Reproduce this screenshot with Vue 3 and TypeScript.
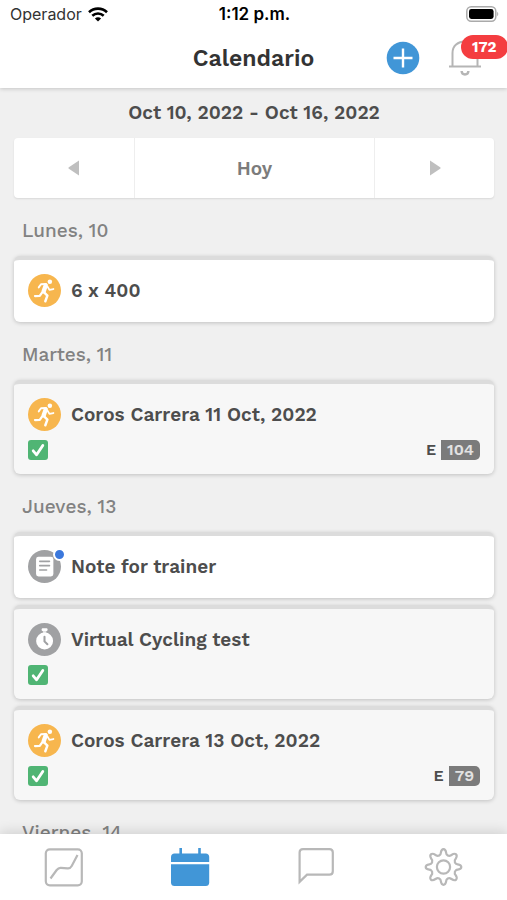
<script setup lang="ts">
import { ref } from 'vue'

type Kind = 'run' | 'note' | 'test'

interface Activity {
  id: number
  kind: Kind
  title: string
  done?: boolean
  effort?: number
  unread?: boolean
}

interface Day {
  label: string
  activities: Activity[]
}

const days = ref<Day[]>([
  { label: 'Lunes, 10', activities: [{ id: 1, kind: 'run', title: '6 x 400' }] },
  {
    label: 'Martes, 11',
    activities: [{ id: 2, kind: 'run', title: 'Coros Carrera 11 Oct, 2022', done: true, effort: 104 }],
  },
  {
    label: 'Jueves, 13',
    activities: [
      { id: 3, kind: 'note', title: 'Note for trainer', unread: true },
      { id: 4, kind: 'test', title: 'Virtual Cycling test', done: true },
      { id: 5, kind: 'run', title: 'Coros Carrera 13 Oct, 2022', done: true, effort: 79 },
    ],
  },
  { label: 'Viernes, 14', activities: [] },
])
</script>

<template>
  <div class="screen">
    <header class="top">
      <div class="status">
        <span class="carrier">
          Operador
          <svg width="20" height="15" viewBox="0 0 20 15" fill="none" stroke="#000" stroke-width="2.6">
            <path d="M1 5.2C6 0.4 14 0.4 19 5.2" />
            <path d="M4.3 8.8C7.5 5.8 12.5 5.8 15.7 8.8" />
            <path d="M10 14.6L6.9 11.4C8.7 9.8 11.3 9.8 13.1 11.4Z" fill="#000" stroke="none" />
          </svg>
        </span>
        <span class="clock">1:12 p.m.</span>
        <svg class="battery" width="34" height="16" viewBox="0 0 34 16">
          <rect x="1.8" y="0.8" width="29" height="14.4" rx="4.4" fill="#fff" stroke="#aaa" stroke-width="1.5" />
          <rect x="4" y="3" width="24.6" height="10" rx="2.4" fill="#000" />
          <path d="M32.2 5.8C33.6 6.6 33.6 9.4 32.2 10.2Z" fill="#aaa" />
        </svg>
      </div>
      <div class="titlebar">
        <h1>Calendario</h1>
        <div class="actions">
          <button type="button" aria-label="Añadir">
            <svg width="34" height="34" viewBox="0 0 34 34">
              <circle cx="17" cy="17" r="16.3" fill="#4196d7" />
              <path d="M17 7.5V26.5M7.5 17H26.5" stroke="#fff" stroke-width="2.4" />
            </svg>
          </button>
          <button class="bell" type="button" aria-label="Notificaciones">
            <svg width="34" height="36" viewBox="0 0 34 36" fill="none" stroke="#b5b5b5" stroke-width="2">
              <path d="M1 26.5H33" />
              <path d="M4.5 26V13C4.5 5.6 10 1.5 17 1.5S29.5 5.6 29.5 13V26" />
              <path d="M13.6 31C13.8 35.6 20.2 35.6 20.4 31" stroke-width="2.4" />
            </svg>
            <span class="count">172</span>
          </button>
        </div>
      </div>
    </header>

    <main class="content">
      <p class="range">Oct 10, 2022 - Oct 16, 2022</p>
      <nav class="week">
        <button type="button" aria-label="Semana anterior">
          <svg width="12" height="16" viewBox="0 0 12 16"><path d="M11 0.5V15.5L0.5 8.6V7.4Z" fill="#bfbfbf" /></svg>
        </button>
        <button type="button">Hoy</button>
        <button type="button" aria-label="Semana siguiente">
          <svg width="12" height="16" viewBox="0 0 12 16"><path d="M1 0.5V15.5L11.5 8.6V7.4Z" fill="#bfbfbf" /></svg>
        </button>
      </nav>

      <section v-for="day in days" :key="day.label">
        <h2>{{ day.label }}</h2>
        <article
          v-for="item in day.activities"
          :key="item.id"
          class="card"
          :class="{ done: item.done }"
        >
          <div class="head">
            <span class="kind">
              <svg v-if="item.kind === 'run'" width="33" height="33" viewBox="0 0 32 32" fill="none" stroke="#fff" stroke-linecap="round" stroke-linejoin="round">
                <circle cx="16" cy="16" r="16" fill="#f7b64e" stroke="none" />
                <circle cx="21.2" cy="7.6" r="2.2" fill="#fff" stroke="none" />
                <path d="M10.4 13L12.6 9.9L17.4 9.7" stroke-width="1.8" />
                <path d="M18.8 12L20.8 15.4L24.6 14.6" stroke-width="1.8" />
                <path d="M17.2 11L15.2 16.8" stroke-width="4.2" />
                <path d="M13.8 17.8L11.4 21.2L6.8 21.4" stroke-width="2.2" />
                <path d="M15.6 17.8L18.8 21L16.8 26.4" stroke-width="2.4" />
              </svg>
              <svg v-else-if="item.kind === 'note'" width="33" height="33" viewBox="0 0 32 32">
                <circle cx="16" cy="16" r="16" fill="#a0a1a3" />
                <rect x="7.8" y="6.6" width="16.8" height="19" rx="2.4" fill="#fff" />
                <path d="M11.4 11H20.8M11.4 15.2H20.8M11.4 19.4H18" stroke="#a0a1a3" stroke-width="1.6" stroke-linecap="round" />
              </svg>
              <svg v-else width="33" height="33" viewBox="0 0 32 32">
                <circle cx="16" cy="16" r="16" fill="#a0a1a3" />
                <rect x="13.3" y="5.2" width="5.6" height="2.6" rx="0.8" fill="#fff" />
                <path d="M14.4 7.4H17.8V10H14.4Z" fill="#fff" opacity="0.7" />
                <circle cx="16.1" cy="17.4" r="8.2" fill="#fff" />
                <path d="M16 13.4V17.8L18.8 20.6" fill="none" stroke="#a0a1a3" stroke-width="2" stroke-linecap="round" />
              </svg>
              <span v-if="item.unread" class="dot"></span>
            </span>
            <h3>{{ item.title }}</h3>
          </div>
          <div v-if="item.done" class="meta">
            <label class="tick">
              <input v-model="item.done" type="checkbox" :aria-label="item.title" />
              <svg width="20" height="20" viewBox="0 0 20 20">
                <path d="M5.2 10.8L8.6 14.8L14.8 5.4" fill="none" stroke="#fff" stroke-width="2.8" stroke-linecap="round" stroke-linejoin="round" />
              </svg>
            </label>
            <span v-if="item.effort" class="effort">E <b>{{ item.effort }}</b></span>
          </div>
        </article>
      </section>
    </main>

    <nav class="tabs">
      <a href="#estadisticas" aria-label="Estadísticas">
        <svg width="40" height="40" viewBox="0 0 40 40" fill="none" stroke="#b8b8b8" stroke-width="2.2">
          <rect x="2.8" y="2.3" width="36" height="36" rx="4" />
          <path d="M7.5 31.5L13.7 23C14.9 21.4 15.9 20.6 17.9 20.8L24.5 21.4C26.5 21.6 27.7 20.8 28.7 19L34.5 8" />
        </svg>
      </a>
      <a href="#calendario" aria-label="Calendario" aria-current="page">
        <svg width="40" height="40" viewBox="0 0 40 40" fill="#4196d7">
          <path d="M9.4 1H12V7.5H9.4ZM28.2 1H30.8V7.5H28.2Z" />
          <path d="M1 15V10C1 8 2.4 6.6 4.4 6.6H35.8C37.8 6.6 39.2 8 39.2 10V15Z" />
          <path d="M1 17.2H39.2V35.4C39.2 37.6 37.8 39 35.8 39H4.4C2.4 39 1 37.6 1 35.4Z" />
        </svg>
      </a>
      <a href="#mensajes" aria-label="Mensajes">
        <svg width="40" height="40" viewBox="0 0 40 40" fill="none" stroke="#b8b8b8" stroke-width="2.2">
          <path d="M2.6 34.8V5.6C2.6 3.6 4 2.2 6 2.2H32.4C34.4 2.2 35.8 3.6 35.8 5.6V24.2C35.8 26.2 34.4 27.6 32.4 27.6H10Z" />
        </svg>
      </a>
      <a href="#ajustes" aria-label="Ajustes">
        <svg width="40" height="40" viewBox="0 0 40 40" fill="none" stroke="#b8b8b8" stroke-width="2.2" stroke-linejoin="round">
          <circle cx="19.5" cy="20" r="6.6" />
          <path transform="translate(-0.5 0)" d="M16.9 7.4C17.6 6.4 17 2.2 20 2.2S22.4 6.4 23.1 7.4S25.6 8.9 26.7 8.7S30.5 5.3 32.6 7.4S31.5 12.2 31.3 13.3S31.6 16.2 32.6 16.9S37.8 17 37.8 20S33.6 22.4 32.6 23.1S31.1 25.6 31.3 26.7S34.7 30.5 32.6 32.6S27.8 31.5 26.7 31.3S23.8 31.6 23.1 32.6S23 37.8 20 37.8S17.6 33.6 16.9 32.6S14.4 31.1 13.3 31.3S9.5 34.7 7.4 32.6S8.5 27.8 8.7 26.7S8.4 23.8 7.4 23.1S2.2 23 2.2 20S6.4 17.6 7.4 16.9S8.9 14.4 8.7 13.3S5.3 9.5 7.4 7.4S12.2 8.5 13.3 8.7S16.2 8.4 16.9 7.4Z" />
        </svg>
      </a>
    </nav>
  </div>
</template>

<style>
body {
  background: #f0f0f0;
}
</style>

<style scoped>
.screen {
  display: flex;
  flex-direction: column;
  height: 100vh;
  overflow: hidden;
  background: #f0f0f0;
  color: #4d4d4d;
  font-family: 'Work Sans', Inter, sans-serif;
}

h1,
h2,
h3,
p {
  margin: 0;
}

button {
  padding: 0;
  border: 0;
  background: none;
  color: inherit;
  font: inherit;
}

svg {
  display: block;
}

.top {
  position: relative;
  background: #fff;
  box-shadow: 0 1px 4px rgba(0, 0, 0, 0.18);
}

.status,
.titlebar {
  display: grid;
  grid-template-columns: 1fr auto 1fr;
  align-items: center;
}

.status {
  height: 28px;
  padding: 0 8px 0 10px;
  color: #000;
  font-family: Inter, sans-serif;
  font-size: 16px;
}

.carrier {
  display: flex;
  align-items: center;
  gap: 6px;
  color: #333;
}

.clock {
  font-size: 17px;
  font-weight: 600;
}

.battery {
  justify-self: end;
}

.titlebar {
  height: 60px;
  padding: 0 25px;
}

h1 {
  grid-column: 2;
  color: #333;
  font-size: 23px;
  font-weight: 600;
}

.actions {
  display: flex;
  justify-content: flex-end;
  align-items: center;
  gap: 28px;
}

.bell {
  position: relative;
}

.count {
  position: absolute;
  top: -5px;
  left: 13px;
  padding: 0 11px;
  border-radius: 12px;
  background: #f43d40;
  color: #fff;
  font-size: 15px;
  font-weight: 700;
  line-height: 24px;
}

.content {
  flex: 1;
  min-height: 0;
  overflow: hidden;
  padding: 0 13px 0 14px;
}

.range {
  font-size: 19px;
  font-weight: 600;
  line-height: 50px;
  text-align: center;
}

.week {
  display: grid;
  grid-template-columns: 1fr 2fr 1fr;
  height: 60px;
  border-radius: 4px;
  background: #fff;
  box-shadow: 0 1px 2px rgba(0, 0, 0, 0.1);
  color: #7c7c7c;
  font-size: 19px;
  font-weight: 600;
}

.week button {
  display: flex;
  align-items: center;
  justify-content: center;
}

.week button + button {
  border-left: 1px solid #eee;
}

h2 {
  padding: 8px 8px 0;
  color: #828282;
  font-size: 19px;
  font-weight: 500;
  line-height: 50px;
}

.card {
  box-sizing: border-box;
  min-height: 66px;
  padding: 14px;
  border-top: 4px solid #dcdcdc;
  border-radius: 6px;
  background: #fff;
  box-shadow: 0 1px 4px rgba(0, 0, 0, 0.2);
}

.card + .card {
  margin-top: 7px;
}

.card.done {
  background: #f7f7f7;
}

.head {
  display: flex;
  align-items: center;
  gap: 10px;
}

.kind {
  position: relative;
}

.dot {
  position: absolute;
  top: -2px;
  right: -5px;
  width: 9px;
  height: 9px;
  border: 2px solid #fff;
  border-radius: 50%;
  background: #3b78dc;
}

h3 {
  font-size: 19px;
  font-weight: 600;
  line-height: 24px;
}

.meta {
  display: flex;
  align-items: center;
  justify-content: space-between;
  margin-top: 9px;
}

.tick {
  display: grid;
}

.tick > * {
  grid-area: 1 / 1;
}

.tick input {
  width: 20px;
  height: 20px;
  margin: 0;
  appearance: none;
  border-radius: 3px;
  background: #50b574;
}

.tick svg {
  pointer-events: none;
}

.effort {
  display: flex;
  align-items: center;
  gap: 5px;
  font-size: 16px;
  font-weight: 600;
  line-height: 20px;
}

.effort b {
  padding: 0 6px;
  border-radius: 0 5px 5px 0;
  background: #7b7b7b;
  color: #e2e2e2;
  font-weight: 600;
}

.tabs {
  position: relative;
  display: grid;
  grid-template-columns: repeat(4, 1fr);
  height: 66px;
  background: #fff;
  box-shadow: 0 -2px 12px rgba(0, 0, 0, 0.14);
}

.tabs a {
  display: grid;
  place-items: center;
}
</style>
